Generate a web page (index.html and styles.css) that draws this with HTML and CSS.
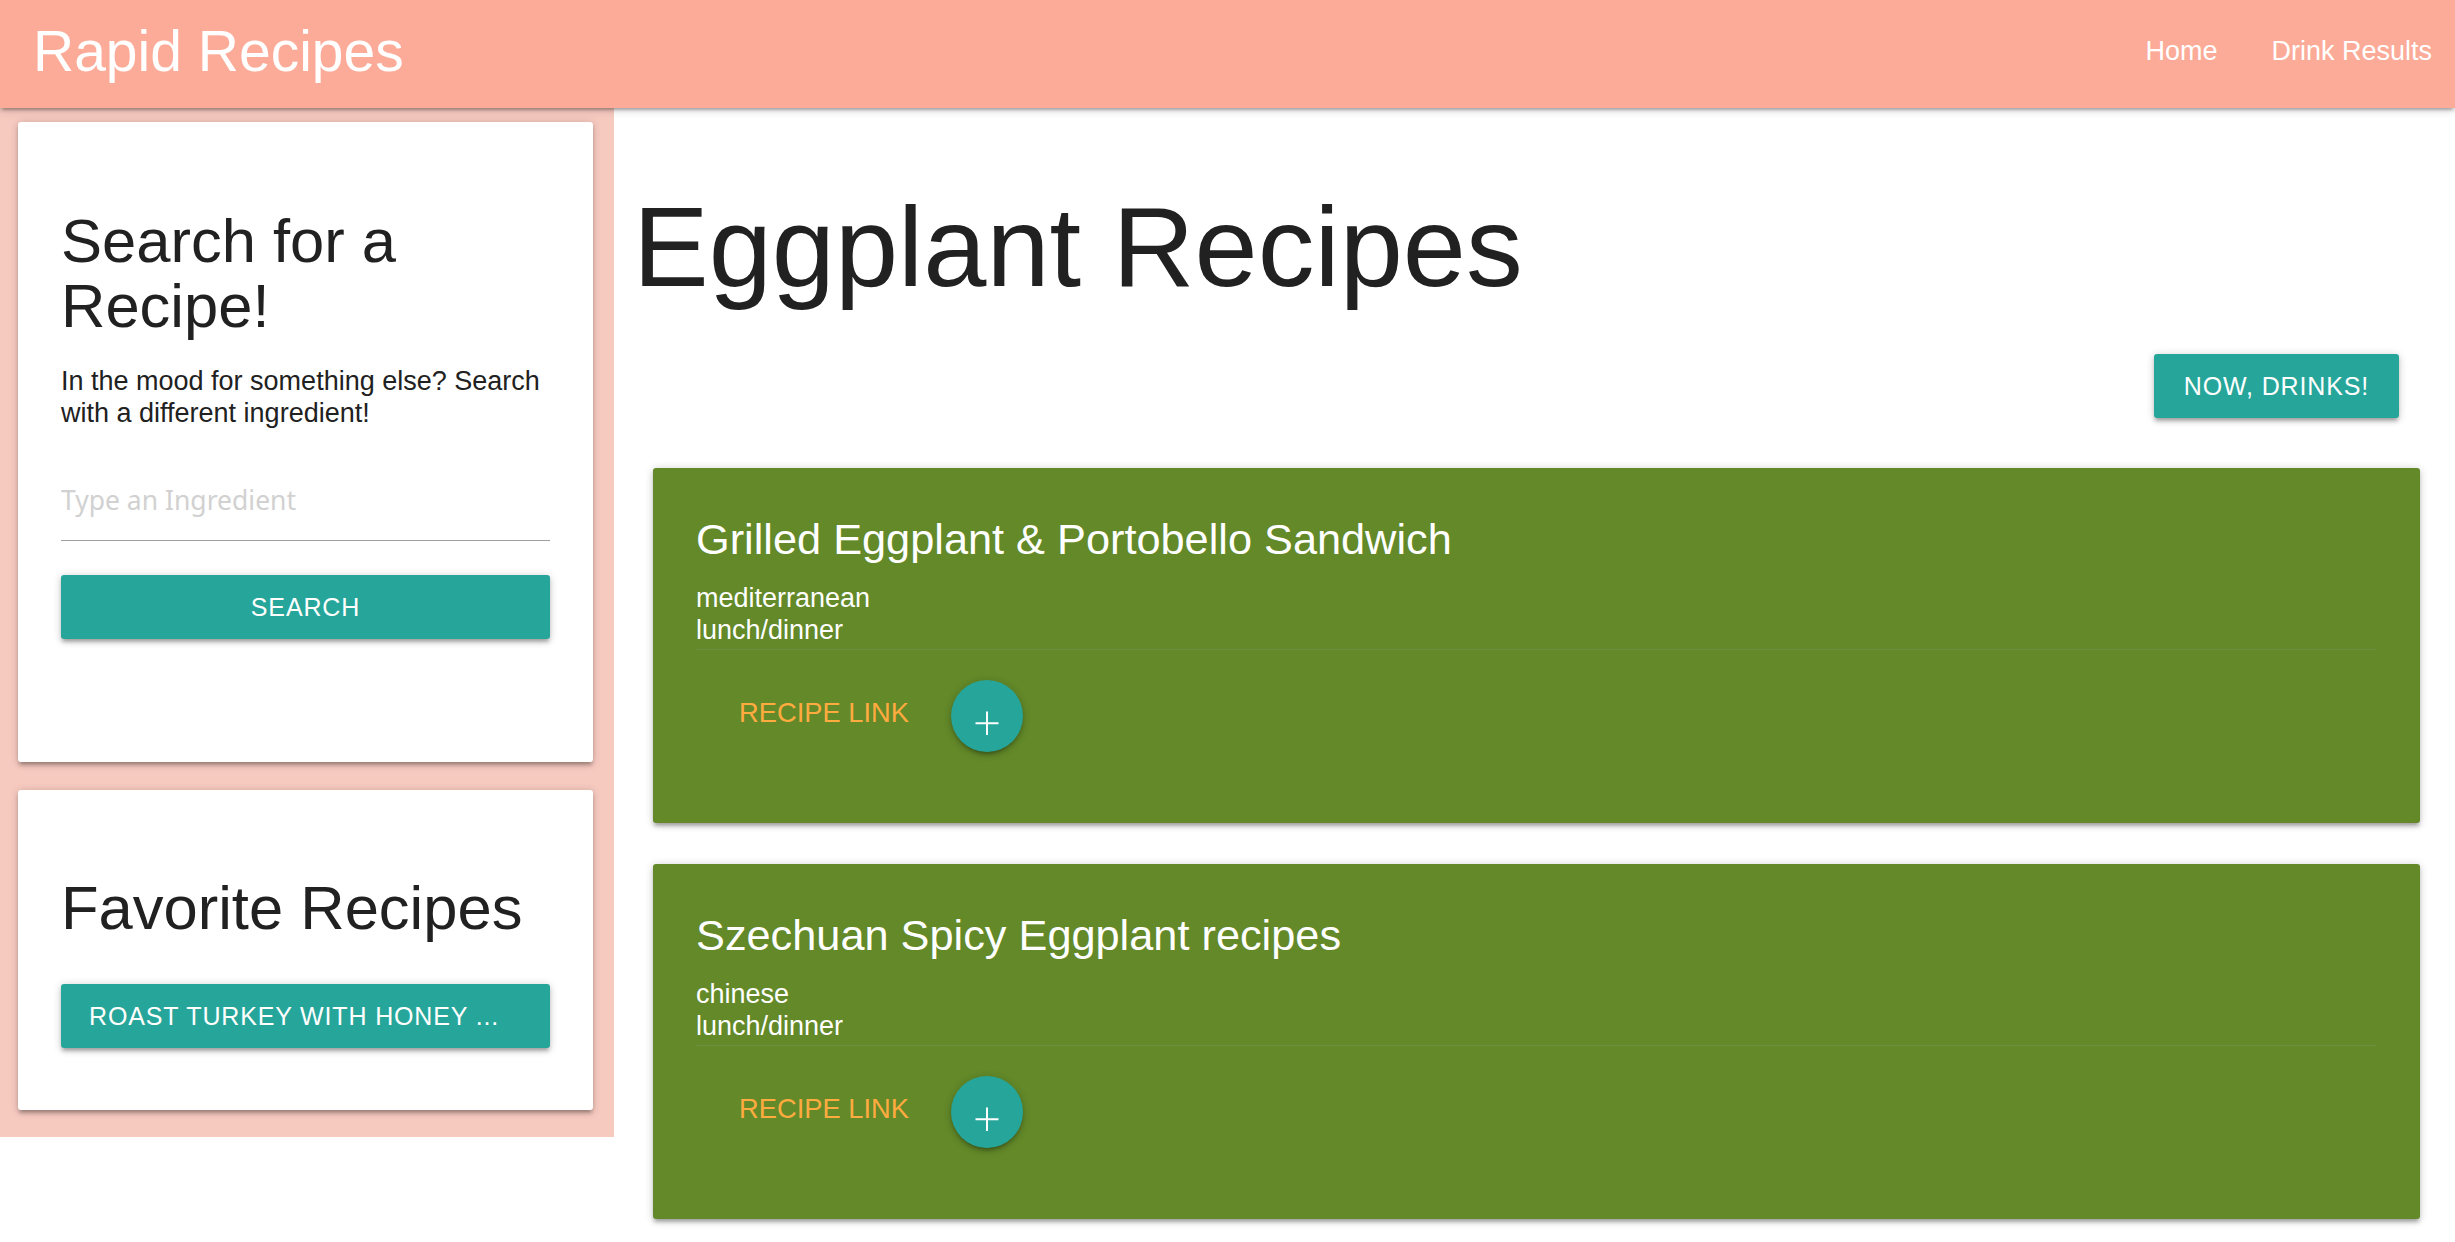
FILE: index.html
```html
<!DOCTYPE html>
<html lang="en">
<head>
<meta charset="utf-8">
<title>Rapid Recipes</title>
<link rel="stylesheet" href="styles.css">
</head>
<body>
<nav class="nav">
  <a class="brand" href="#">Rapid Recipes</a>
  <ul class="nav-links">
    <li><a href="#">Home</a></li>
    <li><a href="#">Drink Results</a></li>
  </ul>
</nav>
<div class="layout">
  <aside class="sidebar">
    <div class="side-card search-card">
      <h4 class="side-title">Search for a Recipe!</h4>
      <p class="side-text">In the mood for something else? Search with a different ingredient!</p>
      <div class="input-field"><input class="ingredient" type="text" placeholder="Type an Ingredient"></div>
      <button class="btn btn-block search-btn">Search</button>
    </div>
    <div class="side-card fav-card">
      <h4 class="side-title fav-title">Favorite Recipes</h4>
      <button class="btn btn-block fav-btn">Roast Turkey with Honey ...</button>
    </div>
  </aside>
  <main class="main">
    <h1 class="page-title">Eggplant Recipes</h1>
    <div class="actions-top"><button class="btn drinks-btn">Now, Drinks!</button></div>
    <div class="results">
      <article class="recipe-card">
        <h2 class="recipe-title">Grilled Eggplant &amp; Portobello Sandwich</h2>
        <p class="recipe-meta">mediterranean<br>lunch/dinner</p>
        <div class="recipe-action">
          <a class="recipe-link" href="#">Recipe Link</a>
          <button class="fab" aria-label="Add to favorites">
            <svg width="72" height="72" viewBox="0 0 72 72"><path d="M24.5 43.3H47.5M36 31.5V55" stroke="#fff" stroke-width="2" fill="none"/></svg>
          </button>
        </div>
      </article>
      <article class="recipe-card">
        <h2 class="recipe-title">Szechuan Spicy Eggplant recipes</h2>
        <p class="recipe-meta">chinese<br>lunch/dinner</p>
        <div class="recipe-action">
          <a class="recipe-link" href="#">Recipe Link</a>
          <button class="fab" aria-label="Add to favorites">
            <svg width="72" height="72" viewBox="0 0 72 72"><path d="M24.5 43.3H47.5M36 31.5V55" stroke="#fff" stroke-width="2" fill="none"/></svg>
          </button>
        </div>
      </article>
    </div>
  </main>
</div>
</body>
</html>
```

FILE: styles.css
```css
* { box-sizing: border-box; }
html, body { margin: 0; padding: 0; }
body {
  font-family: "Liberation Sans", Arial, sans-serif;
  color: #212121;
  background: #fff;
  min-height: 1242px;
}

/* ---------- nav ---------- */
.nav {
  height: 108px;
  padding-bottom: 6px;
  background: #fcab98;
  display: flex;
  align-items: center;
  justify-content: space-between;
  position: relative;
  z-index: 2;
  box-shadow: 0 3.4px 3.4px 0 rgba(0,0,0,.14), 0 5px 1.7px -3.4px rgba(0,0,0,.12), 0 1.7px 8.5px 0 rgba(0,0,0,.2);
}
.brand {
  color: #fff;
  text-decoration: none;
  font-size: 57px;
  padding-left: 33px;
}
.nav-links {
  list-style: none;
  margin: 0 -4px 0 0;
  padding: 0;
  display: flex;
}
.nav-links a {
  display: block;
  color: #fff;
  text-decoration: none;
  font-size: 27px;
  padding: 0 27px;
}

/* ---------- layout ---------- */
.layout {
  display: flex;
  align-items: flex-start;
}
.sidebar {
  width: 614px;
  flex-shrink: 0;
  background: #f7cac0;
  padding: 14px 21px 0 18px;
}
.side-card {
  background: #fff;
  border-radius: 3px;
  padding: 43px;
  box-shadow: 0 3.4px 3.4px 0 rgba(0,0,0,.14), 0 5px 1.7px -3.4px rgba(0,0,0,.12), 0 1.7px 8.5px 0 rgba(0,0,0,.2);
}
.search-card {
  padding-bottom: 123px;
  margin-bottom: 28px;
}
.fav-card {
  padding-bottom: 62px;
  margin-bottom: 27px;
}
.side-title {
  font-size: 61.5px;
  line-height: 65px;
  font-weight: 400;
  margin: 43px 0 27px;
}
.fav-title {
  margin: 42px 0 44px;
}
.side-text {
  font-size: 27px;
  line-height: 32px;
  margin: 0;
}
.input-field {
  margin-top: 30px;
}
.ingredient {
  display: block;
  width: 100%;
  height: 82px;
  border: none;
  border-bottom: 1px solid #9e9e9e;
  background: transparent;
  padding: 0;
  font-family: "Noto Sans", "Open Sans", sans-serif;
  font-size: 26.5px;
  color: #212121;
  outline: none;
}
.ingredient::placeholder { color: #d1d1d1; }

.btn {
  height: 64px;
  padding: 0 30px;
  border: none;
  border-radius: 3px;
  background: #26a69a;
  color: #fff;
  font-family: "Liberation Sans", Arial, sans-serif;
  font-size: 25px;
  letter-spacing: .85px;
  text-transform: uppercase;
  white-space: nowrap;
  cursor: pointer;
  box-shadow: 0 3.4px 3.4px 0 rgba(0,0,0,.14), 0 5px 1.7px -3.4px rgba(0,0,0,.12), 0 1.7px 8.5px 0 rgba(0,0,0,.2);
}
.btn-block {
  display: block;
  width: 100%;
}
.search-btn { margin-top: 34px; }
.fav-btn {
  text-align: left;
  padding-left: 28px;
}

/* ---------- main ---------- */
.main {
  flex: 1;
  padding: 0 21px 0 19px;
}
.page-title {
  font-size: 113.5px;
  line-height: 126px;
  font-weight: 400;
  margin: 76px 0 44px;
}
.actions-top {
  display: flex;
  justify-content: flex-end;
  padding-right: 35px;
}
.results {
  margin: 50px 14px 0 20px;
}
.recipe-card {
  background: #638929;
  border-radius: 3px;
  padding: 41px 44px 71px 43px;
  margin-bottom: 41px;
  color: #fff;
  box-shadow: 0 3.4px 3.4px 0 rgba(0,0,0,.14), 0 5px 1.7px -3.4px rgba(0,0,0,.12), 0 1.7px 8.5px 0 rgba(0,0,0,.2);
}
.recipe-title {
  font-size: 43.3px;
  line-height: 54px;
  font-weight: 400;
  margin: 3px 0 15.6px;
}
.recipe-meta {
  font-size: 27px;
  line-height: 32.7px;
  margin: 0 0 2px;
}
.recipe-action {
  border-top: 1px solid rgba(160,160,160,.2);
  padding-top: 30px;
  display: flex;
  align-items: center;
}
.recipe-link {
  color: #ffab40;
  text-decoration: none;
  text-transform: uppercase;
  font-size: 27.3px;
  line-height: 32px;
  margin: 0 42.5px 7px 43px;
}
.fab {
  width: 72px;
  height: 72px;
  border-radius: 50%;
  border: none;
  padding: 0;
  background: #26a69a;
  display: block;
  cursor: pointer;
  box-shadow: 0 3.4px 3.4px 0 rgba(0,0,0,.14), 0 5px 1.7px -3.4px rgba(0,0,0,.12), 0 1.7px 8.5px 0 rgba(0,0,0,.2);
}
.fab svg { display: block; }
```
